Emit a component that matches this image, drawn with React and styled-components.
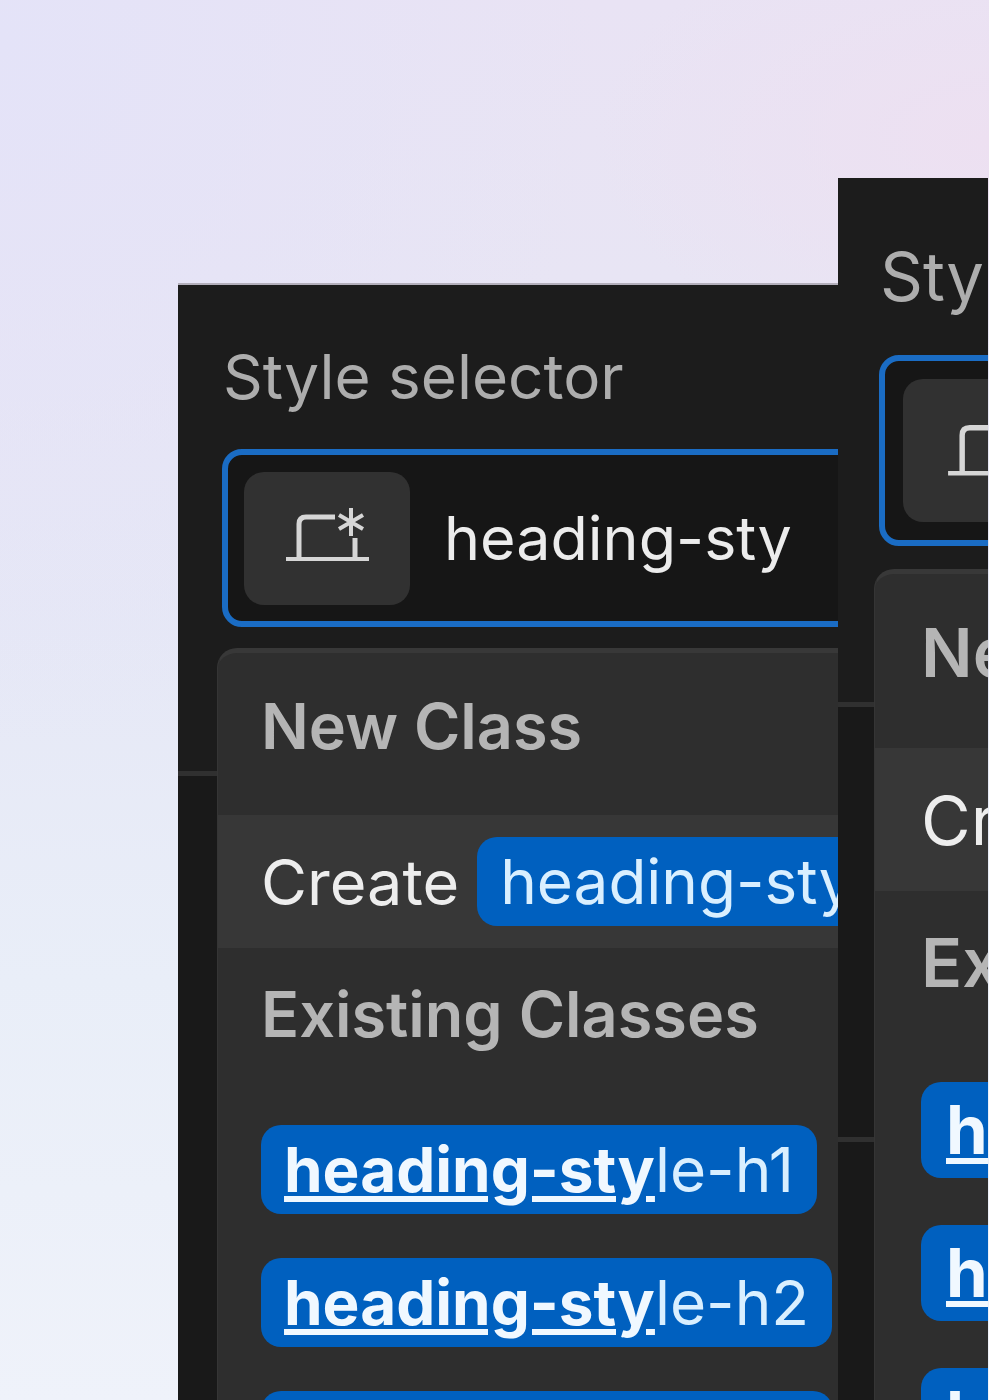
import styled, { createGlobalStyle, ThemeProvider } from "styled-components";

const regular = {
  label: 62,
  input: 61,
  text: 63,
  chipText: 62,
  line: 80,
  gutter: 44,
  top: 52,
  labelGap: 32,
  field: 178,
  fieldPad: 16,
  buttonWidth: 166,
  buttonHeight: 133,
  icon: 84,
  inputGap: 34,
  menuGap: 21,
  menuPad: 7,
  sectionEnd: 144,
  itemPad: 43,
  headTop: 26,
  headBottom: 49,
  row: 133,
  chip: 89,
  chipPad: 23,
  chipGap: 18,
  section: 900,
};

const large = {
  label: 67,
  input: 66,
  text: 68,
  chipText: 67,
  line: 86,
  gutter: 41,
  top: 56,
  labelGap: 35,
  field: 191,
  fieldPad: 18,
  buttonWidth: 179,
  buttonHeight: 143,
  icon: 91,
  inputGap: 37,
  menuGap: 23,
  menuPad: 7,
  sectionEnd: 156,
  itemPad: 46,
  headTop: 28,
  headBottom: 53,
  row: 143,
  chip: 96,
  chipPad: 25,
  chipGap: 19,
  section: 430,
};

const classes = ["h1", "h2", "h3"];

export default function App() {
  return (
    <Page>
      <GlobalStyle />
      <ThemeProvider theme={regular}>
        <Front>
          <StylePanel id="selector" />
        </Front>
      </ThemeProvider>
      <ThemeProvider theme={large}>
        <Side>
          <StylePanel id="selector-large" />
        </Side>
      </ThemeProvider>
    </Page>
  );
}

function StylePanel({ id }) {
  return (
    <>
      <Selector>
        <Label htmlFor={id}>Style selector</Label>
        <Field>
          <StateButton type="button" aria-label="Breakpoint">
            <BreakpointIcon />
          </StateButton>
          <Input id={id} type="text" defaultValue="heading-sty" />
          <Menu>
            <MenuTitle>New Class</MenuTitle>
            <MenuRow type="button" $active>
              Create <Chip>heading-sty</Chip>
            </MenuRow>
            <MenuTitle>Existing Classes</MenuTitle>
            {classes.map((name) => (
              <MenuRow type="button" key={name}>
                <Chip>
                  <Match>heading-sty</Match>le-{name}
                </Chip>
              </MenuRow>
            ))}
          </Menu>
        </Field>
      </Selector>
      <Section />
      <Section />
    </>
  );
}

function BreakpointIcon() {
  return (
    <Icon viewBox="0 0 84 84" aria-hidden="true">
      <path d="M14 62V28q0-7 7-7h29" strokeWidth="5" />
      <path d="M70 42v20" strokeWidth="5" />
      <path d="M1 63h83" strokeWidth="4" />
      <path d="M66 12v28M54 19l24 14M78 19L54 33" strokeWidth="4" />
    </Icon>
  );
}

const GlobalStyle = createGlobalStyle`
  * {
    box-sizing: border-box;
  }
  body {
    margin: 0;
  }
  button, input {
    font: inherit;
    border: 0;
    padding: 0;
  }
`;

const Page = styled.main`
  display: flex;
  height: 100vh;
  overflow: hidden;
  padding-left: 18%;
  padding-right: 1px;
  font-family: Inter, "Liberation Sans", sans-serif;
  background:
    radial-gradient(ellipse 40% 16% at 100% 10%, #ede0f1 0%, #ede0f100 100%),
    radial-gradient(ellipse 60% 50% at 0% 3%, #e4e3f8 0%, #e4e3f800 100%),
    linear-gradient(180deg, #e9e3f4 0%, #e8e5f4 20%, #e6e8f6 45%, #e9eef8 70%, #eff2fa 100%);
`;

const Panel = styled.section`
  overflow: hidden;
  background-color: #191919;
  font-size: ${({ theme }) => theme.text}px;
  line-height: ${({ theme }) => theme.line}px;
  white-space: nowrap;
`;

const Front = styled(Panel)`
  flex: 1;
  min-width: 0;
  margin-top: 283px;
  border-top: 2px solid #b3afbb;
`;

const Side = styled(Panel)`
  flex: 0 0 150px;
  margin-top: 178px;
`;

const Selector = styled.div`
  position: relative;
  z-index: 1;
  padding-top: ${({ theme }) => theme.top}px;
  padding-left: ${({ theme }) => theme.gutter}px;
  padding-bottom: ${({ theme }) => theme.sectionEnd}px;
  background-color: #1c1c1c;
`;

const Section = styled.div`
  height: ${({ theme }) => theme.section}px;
  box-sizing: content-box;
  border-top: 5px solid #303030;
`;

const Label = styled.label`
  display: block;
  margin-bottom: ${({ theme }) => theme.labelGap}px;
  padding-left: 1px;
  color: #adadad;
  font-size: ${({ theme }) => theme.label}px;
`;

/* the field runs past the panel's right edge and is cut there */
const Field = styled.div`
  position: relative;
  display: flex;
  align-items: center;
  height: ${({ theme }) => theme.field}px;
  margin-right: -80px;
  padding-left: ${({ theme }) => theme.fieldPad}px;
  border: 6px solid #1a6cc4;
  border-radius: 20px;
  background-color: #161616;
`;

const StateButton = styled.button`
  flex: none;
  display: flex;
  align-items: center;
  justify-content: center;
  width: ${({ theme }) => theme.buttonWidth}px;
  height: ${({ theme }) => theme.buttonHeight}px;
  border-radius: 20px;
  background-color: #313131;
`;

const Icon = styled.svg`
  width: ${({ theme }) => theme.icon}px;
  height: ${({ theme }) => theme.icon}px;
  fill: none;
  stroke: #d6d6d6;
`;

const Input = styled.input`
  flex: 1;
  min-width: 0;
  margin-left: ${({ theme }) => theme.inputGap}px;
  background: transparent;
  color: #ececec;
  font-size: ${({ theme }) => theme.input}px;
  outline: none;
`;

const Menu = styled.div`
  position: absolute;
  top: calc(100% + 6px + ${({ theme }) => theme.menuGap}px);
  left: -11px;
  right: -11px;
  padding-top: ${({ theme }) => theme.menuPad}px;
  border: 1px solid #353535;
  border-top: 5px solid #383838;
  border-radius: 20px;
  background-color: #2e2e2e;
`;

const MenuTitle = styled.div`
  padding: ${({ theme }) => `${theme.headTop}px ${theme.itemPad}px ${theme.headBottom}px`};
  color: #b5b5b5;
  font-weight: 600;
`;

const MenuRow = styled.button`
  display: flex;
  align-items: center;
  gap: ${({ theme }) => theme.chipGap}px;
  width: 100%;
  height: ${({ theme }) => theme.row}px;
  padding-left: ${({ theme }) => theme.itemPad}px;
  background-color: ${({ $active }) => ($active ? "#373737" : "transparent")};
  color: #ededed;
`;

const Chip = styled.span`
  flex: none;
  height: ${({ theme }) => theme.chip}px;
  padding: 0 ${({ theme }) => theme.chipPad}px;
  border-radius: 20px;
  background-color: #0060bf;
  color: #d9efff;
  font-size: ${({ theme }) => theme.chipText}px;
  line-height: ${({ theme }) => theme.chip}px;
`;

const Match = styled.span`
  color: #f0f8ff;
  font-weight: 700;
  text-decoration: underline;
`;
